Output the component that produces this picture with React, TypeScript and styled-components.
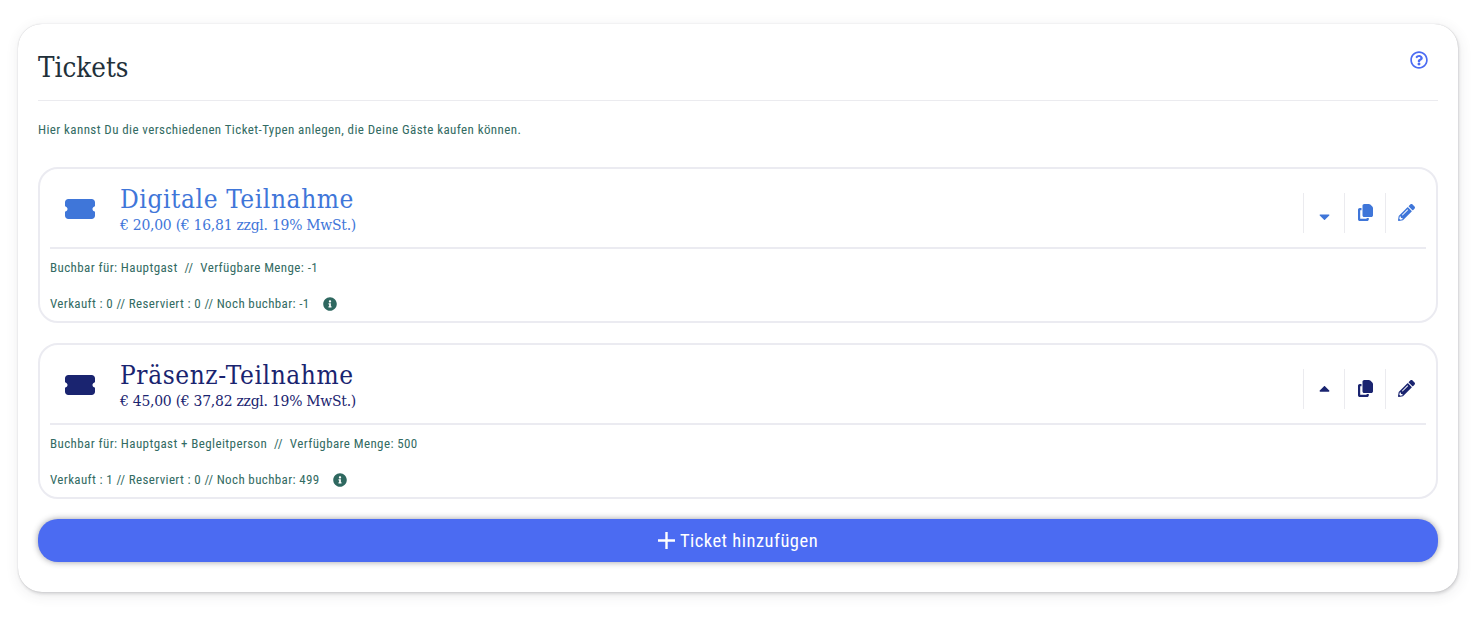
import React from "react";
import styled, { createGlobalStyle } from "styled-components";
import { FaCaretDown, FaCaretUp, FaInfoCircle, FaPencilAlt, FaRegQuestionCircle } from "react-icons/fa";

const Global = createGlobalStyle`
  html, body { margin: 0; padding: 0; background: #fff; }
  body { font-family: "Roboto Condensed", Roboto, "Liberation Sans", sans-serif; }
`;

const Page = styled.div`
  padding: 24px 20px 26px 18px;
`;

const Panel = styled.section`
  background: #fff;
  border-radius: 24px;
  padding: 0 20px 30px;
  box-shadow: 0 0 1px rgba(60, 60, 70, 0.3), 1px 2px 3px rgba(60, 60, 70, 0.16), 1px 3px 14px rgba(60, 60, 70, 0.11);
`;

const PanelHeader = styled.header`
  height: 76px;
  display: flex;
  align-items: center;
  justify-content: space-between;
  border-bottom: 1px solid #ebebef;
`;

const PanelTitle = styled.h1`
  margin: 10px 0 0;
  font: 400 27.5px/34px "DejaVu Serif Condensed", "DejaVu Serif", serif;
  color: #22303a;
`;

const Help = styled.span`
  display: flex;
  margin: -5px 10px 0 0;
  color: #4b6bf2;
  font-size: 18px;
`;

const Intro = styled.p`
  margin: 21px 0 29px;
  font-size: 13px;
  line-height: 16px;
  letter-spacing: 0.4px;
  color: #336b63;
`;

const TicketCard = styled.article`
  border: 2px solid #ebebf1;
  border-radius: 20px;
  padding: 0 10px;
  height: 156px;
  box-sizing: border-box;
  & + & { margin-top: 20px; }
`;

const CardTop = styled.div<{ $color: string }>`
  height: 78px;
  display: flex;
  align-items: center;
  border-bottom: 2px solid #ebebf1;
  color: ${(p) => p.$color};
`;

const TicketIconBox = styled.svg`
  width: 30px;
  height: 20px;
  margin: 2px 25px 0 15px;
  fill: currentColor;
  flex: none;
`;

const Names = styled.div`
  flex: 1;
`;

const Name = styled.div`
  font: 400 26px/30px "DejaVu Serif Condensed", "DejaVu Serif", serif;
  letter-spacing: 0.6px;
`;

const Price = styled.div`
  margin-top: 3px;
  font: 400 15.5px/16px "DejaVu Serif Condensed", "DejaVu Serif", serif;
  letter-spacing: -0.25px;
`;

const Actions = styled.div`
  display: flex;
  align-items: center;
  margin-top: 10px;
`;

const Action = styled.span<{ $down?: boolean }>`
  width: 41px;
  height: 40px;
  border-left: 1px solid #ebebef;
  display: flex;
  align-items: center;
  justify-content: center;
  font-size: 17px;
  padding-top: ${(p) => (p.$down ? 6 : 0)}px;
  padding-bottom: ${(p) => (p.$down ? 0 : 2)}px;
  box-sizing: border-box;
`;

const CopySvg = styled.svg`
  width: 15px;
  height: 17px;
  fill: currentColor;
`;

const Summary = styled.div`
  margin-top: 11px;
  font-size: 13px;
  line-height: 16px;
  letter-spacing: 0.4px;
  color: #336b63;
  white-space: pre;
`;

const Stats = styled.div`
  margin-top: 20px;
  display: flex;
  align-items: center;
  font-size: 13px;
  line-height: 16px;
  letter-spacing: 0.36px;
  color: #336b63;
  white-space: pre;
`;

const Info = styled.span`
  display: flex;
  margin-left: 13px;
  font-size: 14px;
  color: #2f6860;
`;

const AddButton = styled.button`
  display: flex;
  align-items: center;
  justify-content: center;
  gap: 5px;
  width: 100%;
  height: 43px;
  margin-top: 20px;
  padding: 0;
  border: 0;
  border-radius: 20px;
  background: #4b6bf2;
  color: #fff;
  font-family: inherit;
  font-size: 18.5px;
  letter-spacing: 0.5px;
  box-shadow: 0 0 6px rgba(40, 40, 50, 0.45);
`;

const PlusSvg = styled.svg`
  width: 17px;
  height: 17px;
  stroke: currentColor;
  stroke-width: 2.4;
  fill: none;
`;

const tickets = [
  { name: "Digitale Teilnahme", price: "€ 20,00 (€ 16,81 zzgl. 19% MwSt.)", color: "#3f76d9", open: true,
    l1: "Buchbar für: Hauptgast  //  Verfügbare Menge: -1", l2: "Verkauft : 0 // Reserviert : 0 // Noch buchbar: -1" },
  { name: "Präsenz-Teilnahme", price: "€ 45,00 (€ 37,82 zzgl. 19% MwSt.)", color: "#1a2470", open: false,
    l1: "Buchbar für: Hauptgast + Begleitperson  //  Verfügbare Menge: 500", l2: "Verkauft : 1 // Reserviert : 0 // Noch buchbar: 499" },
];

export default function App() {
  return (
    <Page>
      <Global />
      <Panel>
        <PanelHeader>
          <PanelTitle>Tickets</PanelTitle>
          <Help><FaRegQuestionCircle /></Help>
        </PanelHeader>
        <Intro>Hier kannst Du die verschiedenen Ticket-Typen anlegen, die Deine Gäste kaufen können.</Intro>
        {tickets.map((t) => (
          <TicketCard key={t.name}>
            <CardTop $color={t.color}>
              <TicketIconBox viewBox="0 64 576 384">
                <path d="M0 128C0 92.7 28.7 64 64 64H512c35.3 0 64 28.7 64 64v64c0 8.8-7.4 15.7-15.7 18.6C541.5 217.1 528 235 528 256s13.5 38.9 32.3 45.4c8.3 2.9 15.7 9.8 15.7 18.6v64c0 35.3-28.7 64-64 64H64c-35.3 0-64-28.7-64-64V320c0-8.8 7.4-15.7 15.7-18.6C34.5 294.9 48 277 48 256s-13.5-38.9-32.3-45.4C7.4 207.7 0 200.8 0 192V128z" />
              </TicketIconBox>
              <Names>
                <Name>{t.name}</Name>
                <Price>{t.price}</Price>
              </Names>
              <Actions>
                <Action $down={t.open}>{t.open ? <FaCaretDown /> : <FaCaretUp />}</Action>
                <Action>
                  <CopySvg viewBox="0 0 15 17">
                    <path d="M4.500 1.800C4.500.8 5.300 0 6.300 0h4.500c.6 0 1.100.2 1.500.6l2 2c.4.4.7 1 .7 1.600v7c0 1-.8 1.800-1.800 1.800H6.300c-1 0-1.800-.8-1.800-1.800z" />
                    <path d="M1.800 4H3.500v2.200H2.200v8.600h6.400v-.8h2.200v1.200c0 1-.8 1.800-1.800 1.800H1.800C.8 17 0 16.200 0 15.200V5.800C0 4.800.8 4 1.800 4z" />
                  </CopySvg>
                </Action>
                <Action><FaPencilAlt /></Action>
              </Actions>
            </CardTop>
            <Summary>{t.l1}</Summary>
            <Stats>{t.l2}<Info><FaInfoCircle /></Info></Stats>
          </TicketCard>
        ))}
        <AddButton>
          <PlusSvg viewBox="0 0 17 17"><path d="M8.500 0v17M0 8.500h17" /></PlusSvg>
          Ticket hinzufügen
        </AddButton>
      </Panel>
    </Page>
  );
}
